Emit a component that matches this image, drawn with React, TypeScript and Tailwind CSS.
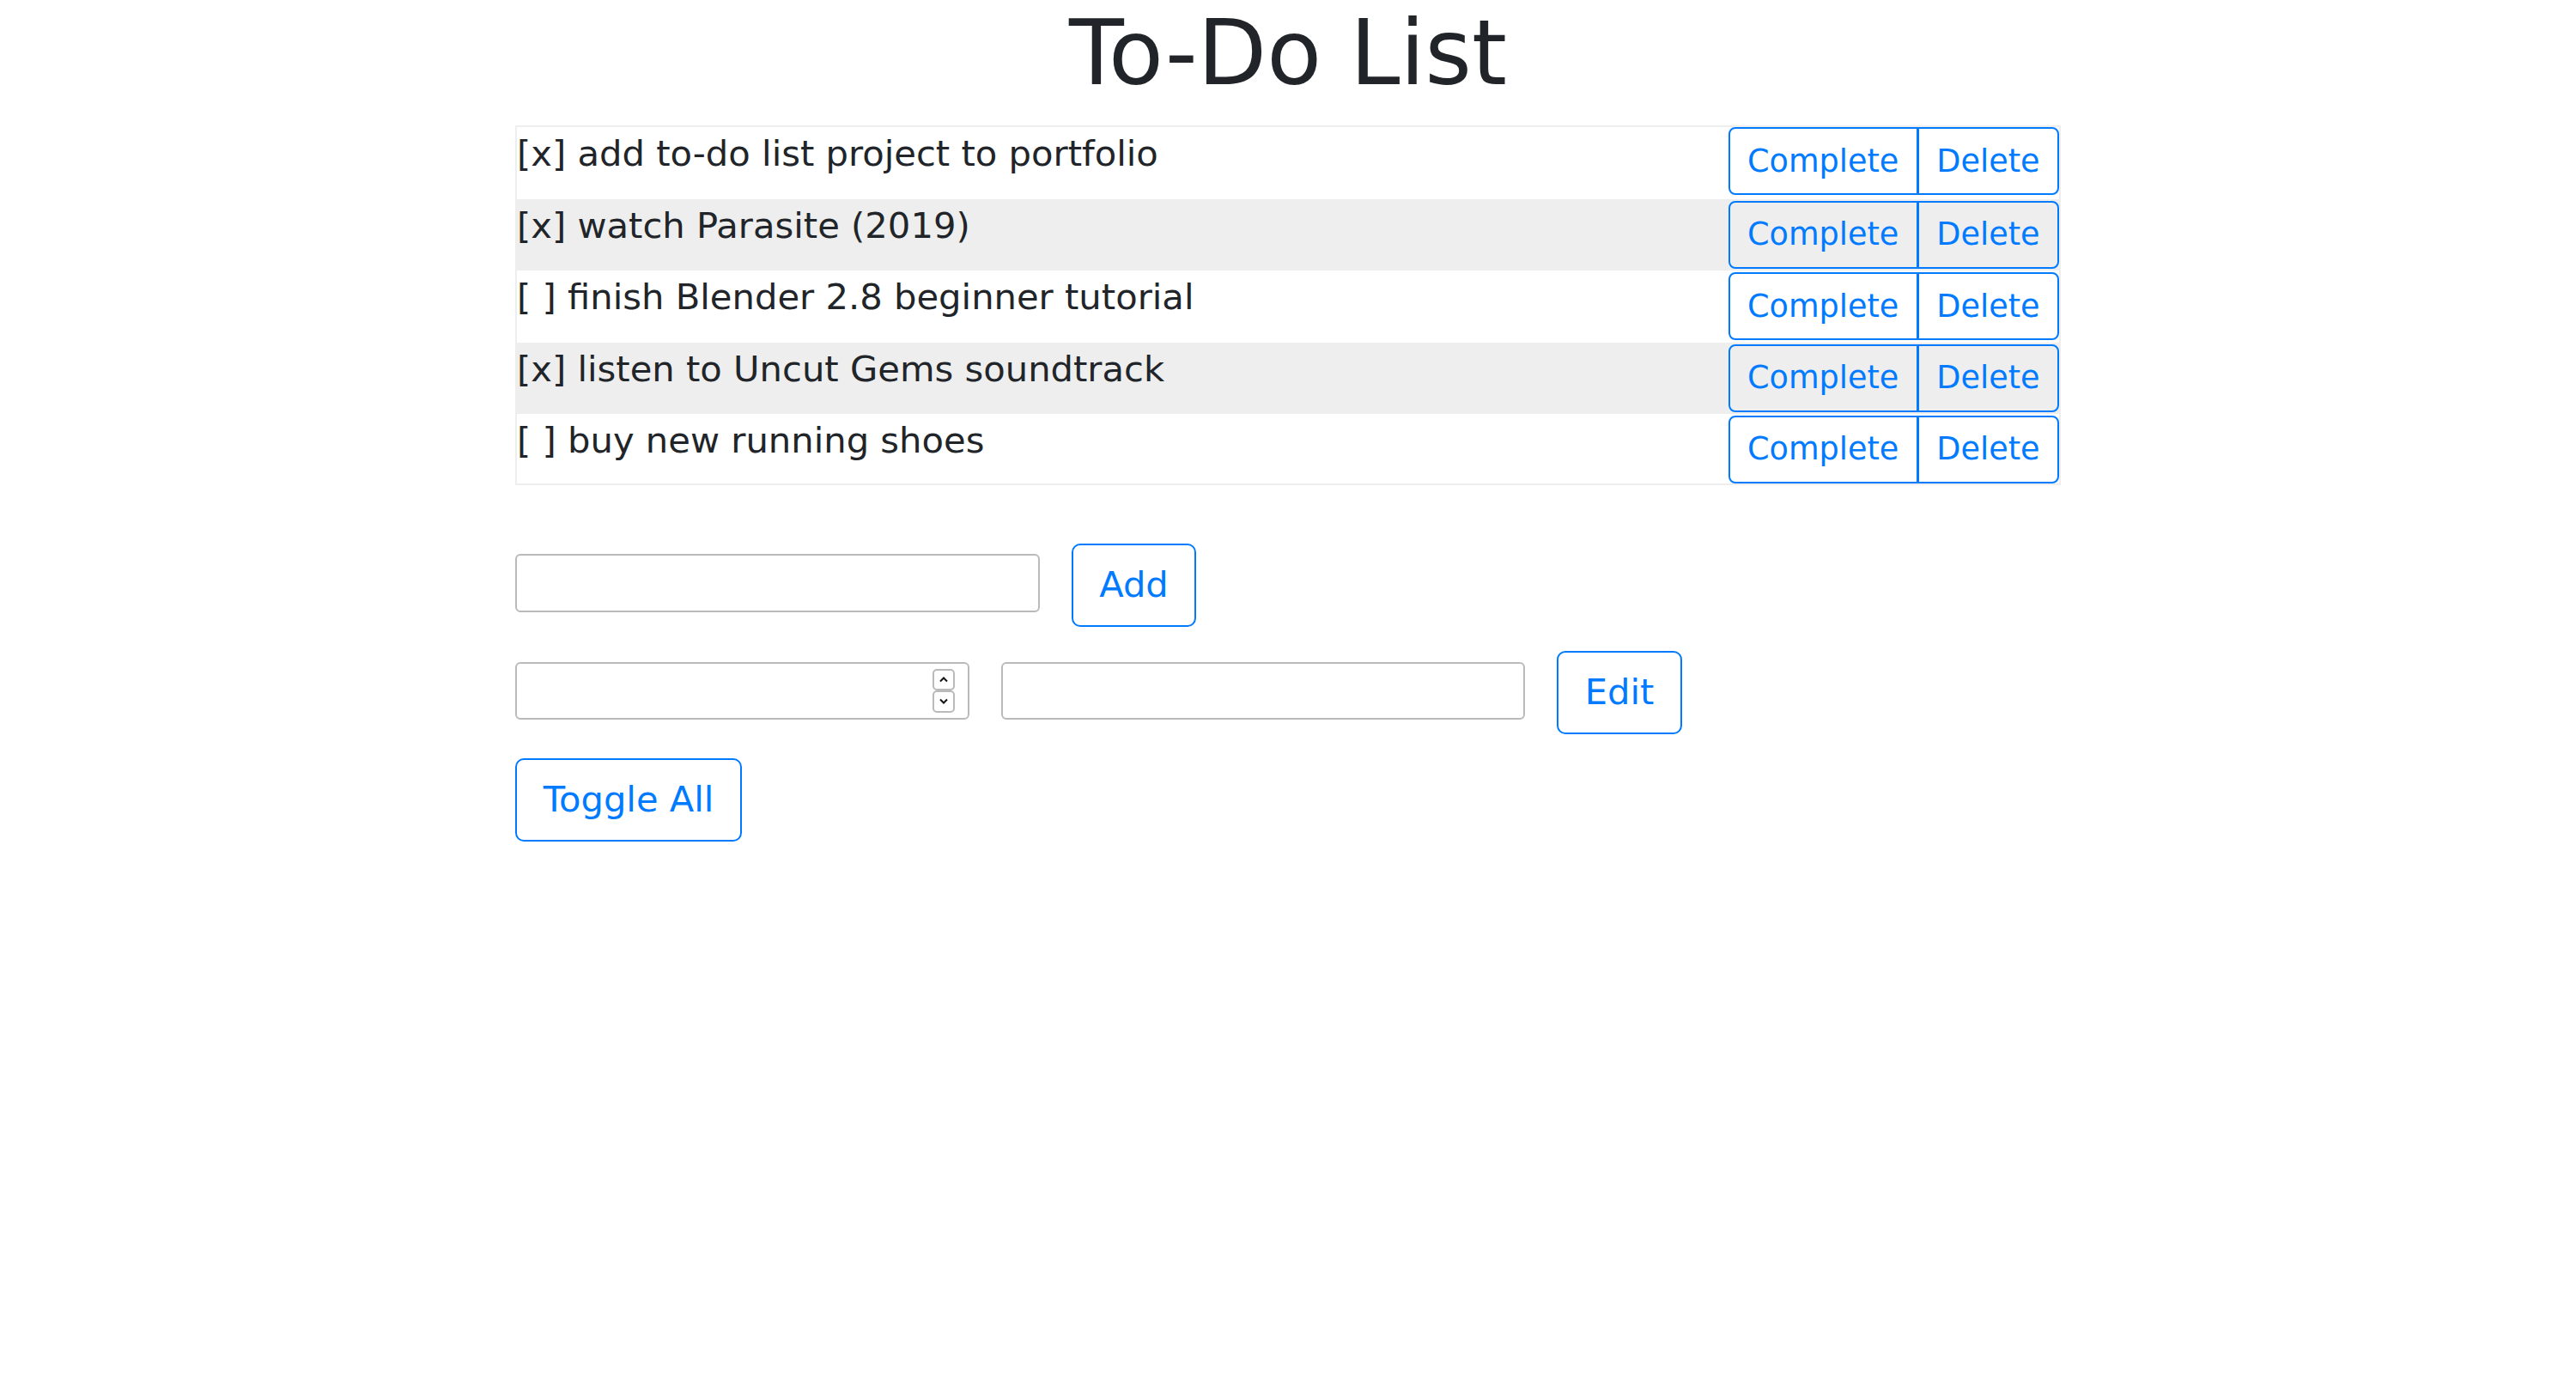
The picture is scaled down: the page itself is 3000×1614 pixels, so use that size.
import React from "react";

const todos = [
  "[x] add to-do list project to portfolio",
  "[x] watch Parasite (2019)",
  "[ ] finish Blender 2.8 beginner tutorial",
  "[x] listen to Uncut Gems soundtrack",
  "[ ] buy new running shoes",
];

function Chevron({ up }: { up: boolean }) {
  return (
    <svg width="12" height="8" viewBox="0 0 12 8" className="block">
      {up ? (
        <polyline points="2,6.5 6,2.5 10,6.5" fill="none" stroke="#111" strokeWidth="2" />
      ) : (
        <polyline points="2,1.5 6,5.5 10,1.5" fill="none" stroke="#111" strokeWidth="2" />
      )}
    </svg>
  );
}

export default function App() {
  return (
    <div className="min-h-screen w-full bg-white font-['DejaVu_Sans',sans-serif] text-[#212529]">
      <div className="mx-auto w-[1800px]">
        <h1 className="m-0 mb-[21px] text-center text-[104.5px] font-normal leading-[1.2]">To-Do List</h1>

        <div className="border-2 border-[#eeeeee]">
          {todos.map((t, i) => (
            <div
              key={i}
              className={`flex items-start justify-between ${i === 4 ? "h-[81px]" : "h-[83.4px]"} ${i % 2 === 1 ? "bg-[#eeeeee]" : "bg-transparent"}`}
            >
              <div className="text-[41.7px] leading-[62.4px]">{t}</div>
              <div className={`flex ${i === 0 ? "mt-0" : "mt-[2px]"}`}>
                <button className="h-[79px] rounded-l-[8px] border-2 border-[#007bff] px-[20.5px] text-[36.6px] leading-[54px] text-[#007bff]">
                  Complete
                </button>
                <button className="-ml-[1px] h-[79px] rounded-r-[8px] border-2 border-[#007bff] px-[20.5px] text-[36.6px] leading-[54px] text-[#007bff]">
                  Delete
                </button>
              </div>
            </div>
          ))}
        </div>

        <div className="mt-[68px] flex items-center gap-[37px]">
          <div className="mb-[4px] h-[68px] w-[611px] rounded-[6px] border-2 border-[#bababa]" />
          <button className="h-[97px] w-[145px] rounded-[10px] border-2 border-[#007bff] text-[41.6px] leading-[60px] text-[#007bff]">
            Add
          </button>
        </div>

        <div className="mt-[28px] flex items-center gap-[37px]">
          <div className="mb-[4px] flex h-[67px] w-[529px] items-center justify-end rounded-[6px] border-2 border-[#bababa] pr-[15px]">
            <div className="flex flex-col">
              <div className="flex h-[25px] w-[26px] items-center justify-center rounded-[5px] border-2 border-[#bababa]">
                <Chevron up />
              </div>
              <div className="flex h-[26px] w-[26px] items-center justify-center rounded-[5px] border-2 border-[#bababa]">
                <Chevron up={false} />
              </div>
            </div>
          </div>
          <div className="mb-[4px] h-[67px] w-[610px] rounded-[6px] border-2 border-[#bababa]" />
          <button className="h-[97px] w-[146px] rounded-[10px] border-2 border-[#007bff] text-[41.6px] leading-[60px] text-[#007bff]">
            Edit
          </button>
        </div>

        <div className="mt-[28px] flex">
          <button className="h-[97px] w-[264px] rounded-[10px] border-2 border-[#007bff] text-[41.6px] leading-[60px] text-[#007bff]">
            Toggle All
          </button>
        </div>
      </div>
    </div>
  );
}
